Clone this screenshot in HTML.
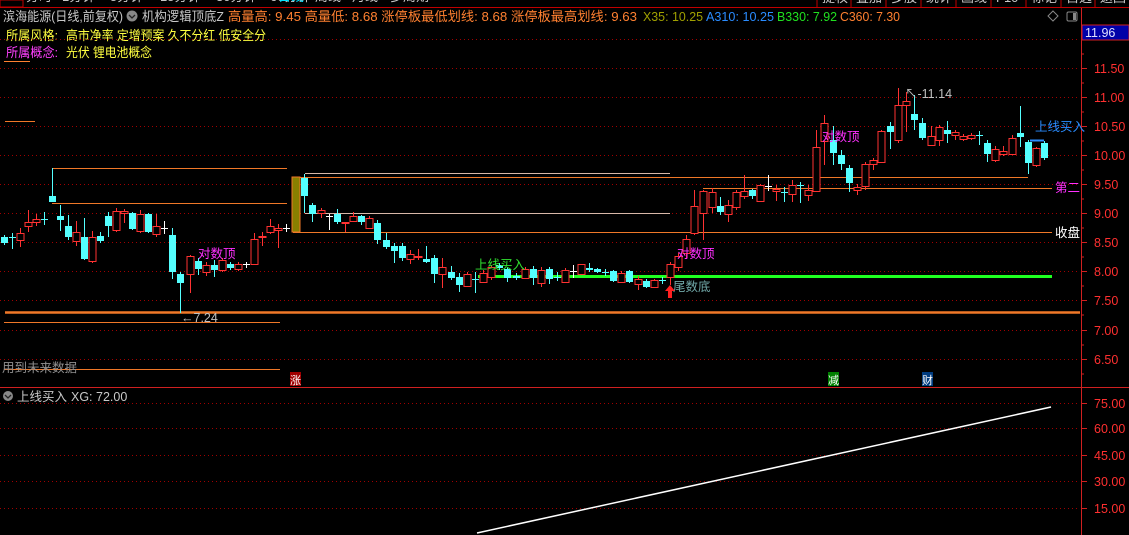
<!DOCTYPE html>
<html><head><meta charset="utf-8">
<style>
html,body{margin:0;padding:0;background:#000;width:1129px;height:535px;overflow:hidden}
body{font-family:"Liberation Sans","Noto Sans CJK SC",sans-serif;position:relative}
svg{position:absolute;left:0;top:0}
svg text{font-family:"Liberation Sans","Noto Sans CJK SC",sans-serif}
</style></head><body>
<svg id="s" width="1129" height="535" xmlns="http://www.w3.org/2000/svg">
<rect width="1129" height="535" fill="#000"/>
<g font-size="13" fill="#c8c8c8">
<text x="26" y="1">分时</text><text x="62" y="1">1分钟</text><text x="110" y="1">5分钟</text><text x="160" y="1">15分钟</text><text x="216" y="1">30分钟</text><text x="270" y="1">60分钟</text><text x="278" y="1" fill="#00e0ff">日线</text><text x="315" y="1">周线</text><text x="352" y="1">月线</text><text x="390" y="1">多周期</text>
</g>
<rect x="0" y="0" width="23" height="7" fill="#000" stroke="#c00000"/>
<g stroke="#c00000" fill="none">
<line x1="0" y1="7.5" x2="1129" y2="7.5"/>
<line x1="817" y1="0" x2="817" y2="7"/><line x1="851" y1="0" x2="851" y2="7"/><line x1="886" y1="0" x2="886" y2="7"/><line x1="921" y1="0" x2="921" y2="7"/><line x1="956" y1="0" x2="956" y2="7"/><line x1="991" y1="0" x2="991" y2="7"/><line x1="1026" y1="0" x2="1026" y2="7"/><line x1="1061" y1="0" x2="1061" y2="7"/><line x1="1095" y1="0" x2="1095" y2="7"/>
</g>
<g font-size="13" fill="#c8c8c8"><text x="822" y="2">提权</text><text x="856" y="2">叠加</text><text x="891" y="2">多股</text><text x="926" y="2">统计</text><text x="961" y="2">画线</text><text x="996" y="2">F10</text><text x="1031" y="2">标记</text><text x="1066" y="2">自选</text><text x="1100" y="2">返回</text></g>
<g font-size="13">
<text x="3" y="21" fill="#c8c8c8" textLength="120" lengthAdjust="spacingAndGlyphs">滨海能源(日线,前复权)</text>
<circle cx="132" cy="16" r="5.5" fill="#888"/><path d="M129 15 l3 3 l3 -3" stroke="#222" stroke-width="1.3" fill="none"/>
<text x="142" y="21" fill="#c8c8c8" textLength="82" lengthAdjust="spacingAndGlyphs">机构逻辑顶底Z</text>
<text x="228" y="21" fill="#ff8030" textLength="409" lengthAdjust="spacingAndGlyphs">高量高: 9.45  高量低: 8.68  涨停板最低划线: 8.68  涨停板最高划线: 9.63</text>
<text x="643" y="21" fill="#a0a000" textLength="60" lengthAdjust="spacingAndGlyphs">X35: 10.25</text>
<text x="706" y="21" fill="#2a8cff" textLength="68" lengthAdjust="spacingAndGlyphs">A310: 10.25</text>
<text x="777" y="21" fill="#20e020" textLength="60" lengthAdjust="spacingAndGlyphs">B330: 7.92</text>
<text x="840" y="21" fill="#ff8030" textLength="60" lengthAdjust="spacingAndGlyphs">C360: 7.30</text>
<text x="6" y="40" fill="#ffff40" textLength="52" lengthAdjust="spacingAndGlyphs">所属风格:</text>
<text x="66" y="40" fill="#ffff40" textLength="200" lengthAdjust="spacingAndGlyphs">高市净率 定增预案 久不分红 低安全分</text>
<text x="6" y="57" fill="#ff40ff" textLength="52" lengthAdjust="spacingAndGlyphs">所属概念:</text>
<text x="66" y="57" fill="#ffff40" textLength="86" lengthAdjust="spacingAndGlyphs">光伏 锂电池概念</text>
</g>
<path d="M1053 11 l5 5 l-5 5 l-5 -5z" stroke="#888" fill="none"/>
<rect x="1067" y="12" width="10" height="9" rx="1.5" stroke="#888" fill="none"/><rect x="1073" y="13" width="3" height="7" fill="#888"/>
<line x1="4" y1="61.5" x2="30" y2="61.5" stroke="#ff8030"/>
<g id="grid"></g>
<g id="lines"></g>
<g id="candles"></g>
<g id="labels" font-size="12.5"></g>
</svg>
<script>
var NS="http://www.w3.org/2000/svg";
function el(p,t,a,txt){var e=document.createElementNS(NS,t);for(var k in a)e.setAttribute(k,a[k]);if(txt!=null)e.textContent=txt;document.getElementById(p).appendChild(e);return e;}
var lv=[[39,"12.00"],[68,"11.50"],[97,"11.00"],[126,"10.50"],[155,"10.00"],[184,"9.50"],[213,"9.00"],[242,"8.50"],[271,"8.00"],[300,"7.50"],[330,"7.00"],[359,"6.50"]];
lv.forEach(function(l){el("grid","line",{x1:0,x2:1080,y1:l[0]+.5,y2:l[0]+.5,stroke:"#a00000","stroke-dasharray":"1 3"});
 el("grid","line",{x1:1081,x2:1087,y1:l[0]+.5,y2:l[0]+.5,stroke:"#d02020"});
 el("grid","line",{x1:1081,x2:1084,y1:l[0]+15,y2:l[0]+15,stroke:"#d02020"});
 if(l[0]>45)el("grid","text",{x:1094,y:l[0]+5,fill:"#ff3030","font-size":"12.5"},l[1]);});
el("grid","line",{x1:1081.5,x2:1081.5,y1:8,y2:535,stroke:"#d02020"});
el("grid","line",{x1:0,x2:1129,y1:387.5,y2:387.5,stroke:"#d02020"});
el("grid","rect",{x:1082,y:25,width:47,height:15,fill:"#0000a8",stroke:"#d02020"});
el("grid","text",{x:1085,y:37,fill:"#e0e0ff","font-size":"12.5"},"11.96");
var lp=[[403,"75.00"],[428,"60.00"],[455,"45.00"],[481,"30.00"],[508,"15.00"]];
lp.forEach(function(l){el("grid","line",{x1:0,x2:1080,y1:l[0]+.5,y2:l[0]+.5,stroke:"#a00000","stroke-dasharray":"1 3"});
 el("grid","line",{x1:1081,x2:1087,y1:l[0]+.5,y2:l[0]+.5,stroke:"#d02020"});
 el("grid","text",{x:1094,y:l[0]+5,fill:"#ff3030","font-size":"12.5"},l[1]);});
el("grid","line",{x1:477,y1:533,x2:1051,y2:407,stroke:"#fff","stroke-width":1.5});
var O="#f07828";
function L(x1,y,x2,c,w){el("lines","line",{x1:x1,x2:x2,y1:y+.5,y2:y+.5,stroke:c||O,"stroke-width":w||1});}
L(52,168,287);L(52,203,287);L(5,121,35);
L(5,312,1080,O,2.5);L(4,322,280);L(4,369,280);
L(293,232,1052);L(298,177,1028);L(703,188,1052);
L(305,173,670,"#d8b8a8");L(305,213,670,"#d8b8a8");
L(478,276,1052,"#20ff20",3);
el("lines","rect",{x:292,y:177,width:8,height:55,fill:"#888000",stroke:O});
var C=[[4,237,243,"c"],[12,237,238,"c",233,249],[20,233,240,"r",228,247],[28,222,226,"r",210,232],[36,219,222,"r",214,226],[44,219,219,"c",212,225],[52,196,202,"c",168,202],[60,216,220,"c",205,231],[68,226,237,"c",215,240],[76,232,241,"r",221,246],[84,237,259,"c",218,260],[92,237,261,"r",231,263],[100,236,241,"c",232,243],[108,216,226,"c",212,237],[116,211,230,"r",208,232],[124,211,213,"r",209,223],[132,213,229,"c",212,230],[140,214,231,"r",210,233],[148,214,232,"c",213,233],[156,226,234,"r",214,237],[164,228,228,"w",221,234],[172,235,272,"c",228,279],[180,274,283,"c",272,313],[190,256,274,"r",255,293],[198,261,269,"c",258,275],[206,265,272,"r",262,276],[214,265,270,"c",260,277],[222,260,270,"r",258,272],[230,264,268,"c",262,270],[238,264,269,"r",262,271],[246,264,264,"w",262,268],[254,239,264,"r",233,265],[262,236,237,"r",232,246],[270,226,232,"r",219,234],[278,228,230,"r",224,248],[286,228,228,"w",224,232],
[304,178,196,"c",174,213],[312,205,214,"c",203,222],[321,210,213,"r",208,218],[329,216,216,"w",214,230],[337,214,222,"c",209,224],[345,222,223,"r",222,232],[353,216,221,"r",212,222],[361,216,222,"c",215,225],[369,218,228,"r",216,229],[377,223,240,"c",220,244],[386,240,247,"c",233,249],[394,246,251,"c",243,263],[402,246,258,"c",243,261],[410,254,259,"r",250,264],[418,256,257,"r",249,260],[426,259,262,"c",246,263],[434,258,274,"c",255,283],[442,267,274,"r",258,288],[451,272,278,"c",266,280],[459,277,285,"c",273,292],[467,274,286,"r",272,287],[475,279,280,"c",272,293],[483,273,282,"r",270,283],[491,267,277,"r",265,280],[499,265,268,"c",263,270],[507,269,278,"c",267,282],[516,276,278,"c",273,280],[525,269,278,"r",267,279],[533,269,278,"c",266,285],[541,270,283,"r",267,287],[549,269,279,"c",267,284],[557,277,278,"c",272,281],[565,270,282,"r",268,283],[573,271,271,"w",265,278],[581,264,274,"r",264,275],[589,268,270,"c",263,272],[597,269,272,"c",268,273],[605,272,272,"c",269,276],[613,271,281,"c",270,282],[621,273,282,"r",271,283],[629,271,282,"c",270,283],[638,279,284,"r",276,290],[646,281,287,"c",279,288],[654,280,287,"r",279,288],[662,280,280,"c",277,284],
[670,264,277,"r",262,285],[678,256,267,"r",253,271],[686,239,253,"r",235,258],[694,206,233,"r",190,235],[703,191,213,"r",190,240],[712,192,207,"r",188,213],[720,206,212,"c",197,215],[728,205,214,"r",200,222],[736,192,207,"r",190,210],[744,191,196,"r",175,199],[752,190,196,"c",189,199],[760,185,201,"r",184,202],[768,186,186,"w",175,191],[776,189,191,"r",185,201],[784,192,193,"c",187,202],[792,185,194,"r",180,202],[800,185,186,"c",182,203],[808,190,195,"r",185,201],[816,147,191,"r",130,192],[824,123,141,"r",115,165],[833,140,153,"c",126,165],[841,155,164,"c",150,170],[849,168,183,"c",165,192],[857,187,190,"r",184,195],[865,164,186,"r",162,190],[873,160,164,"r",158,170],[881,131,162,"r",130,163],[890,126,132,"c",122,149],[898,105,140,"r",88,143],[906,101,105,"r",92,132],[914,114,120,"c",95,130],[922,123,138,"c",118,140],[931,136,145,"r",126,146],[939,127,140,"r",125,146],[947,130,134,"c",121,143],[955,132,135,"r",130,140],[963,136,139,"r",134,141],[971,135,138,"r",133,140],[979,135,136,"c",131,145],[987,143,154,"c",140,162],[995,149,160,"r",146,162],[1003,151,154,"r",146,156],[1012,138,154,"r",135,155],[1020,133,137,"c",106,147],[1028,142,163,"c",140,174],[1036,148,165,"r",147,167],[1044,143,158,"c",141,160]];
C.forEach(function(c){var col=c[3]=="r"?"#ff3232":c[3]=="c"?"#54ffff":"#ffffff";
 var hi=c[4]||c[1]-2,lo=c[5]||c[2]+2;
 el("candles","line",{x1:c[0]+.5,x2:c[0]+.5,y1:hi,y2:lo,stroke:col});
 var h=Math.max(1,c[2]-c[1]);
 if(c[3]=="r")el("candles","rect",{x:c[0]-3,y:c[1]+.5,width:7,height:h,fill:"#000",stroke:col});
 else if(h<=1)el("candles","line",{x1:c[0]-3,x2:c[0]+4,y1:c[1]+.5,y2:c[1]+.5,stroke:col});
 else el("candles","rect",{x:c[0]-3,y:c[1],width:7,height:h,fill:col});});
el("candles","line",{x1:1030,x2:1044,y1:140.5,y2:140.5,stroke:"#2a8cff","stroke-width":2});
function T(x,y,c,t,fs){el("labels","text",{x:x,y:y,fill:c,"font-size":fs||12.5},t);}
T(198,258,"#ff30ff","对数顶");T(677,258,"#ff30ff","对数顶");T(822,141,"#ff30ff","对数顶");
T(475,269,"#30e030","上线买入");T(673,291,"#70a8a8","尾数底");
T(181,322,"#c0c0c0","←7.24");T(905,98,"#c0c0c0","↖-11.14");
T(1035,131,"#2a8cff","上线买入");T(1055,192,"#ff30ff","第二");T(1055,237,"#ffffff","收盘");
T(2,372,"#909090","用到未来数据");
el("labels","path",{d:"M670 285 l-5 6 h3 v7 h4 v-7 h3z",fill:"#ff2020"});
el("labels","rect",{x:290,y:372,width:11,height:14,fill:"#a00000"});T(290,384,"#fff","涨",11);
el("labels","rect",{x:828,y:372,width:11,height:14,fill:"#008000"});T(828,384,"#fff","减",11);
el("labels","rect",{x:922,y:372,width:11,height:14,fill:"#003c80"});T(922,384,"#fff","财",11);
el("labels","circle",{cx:8,cy:396,r:5,fill:"#888"});
el("labels","path",{d:"M5 395 l3 3 l3 -3",stroke:"#222","stroke-width":1.3,fill:"none"});
T(17,401,"#c8c8c8","上线买入");T(71,401,"#c8c8c8","XG: 72.00");
</script>
</body></html>
